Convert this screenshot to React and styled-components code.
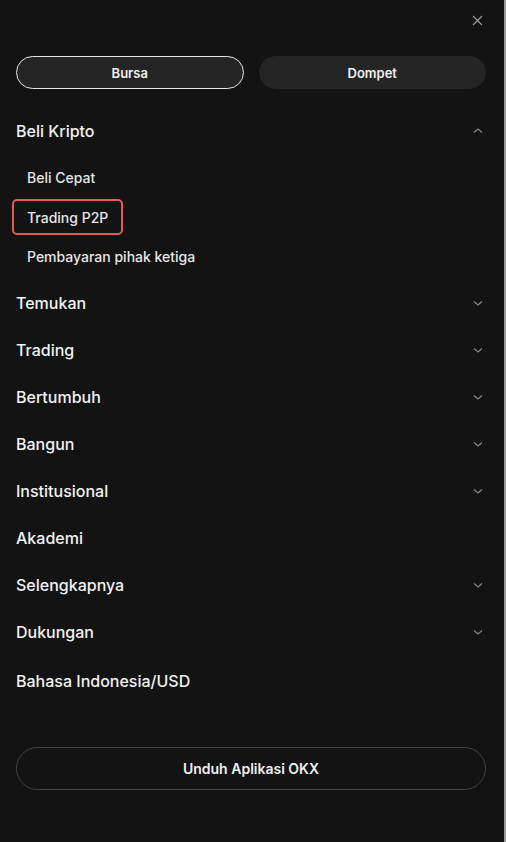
import React from 'react';
import styled, { createGlobalStyle } from 'styled-components';

const GlobalStyle = createGlobalStyle`
  html, body {
    margin: 0;
    padding: 0;
    background: #131313;
  }
  body {
    font-family: Inter, "Noto Sans", sans-serif;
    -webkit-font-smoothing: antialiased;
  }
`

const Page = styled.div`
  display: flex;
  width: 506px;
  height: 842px;
  overflow: hidden;
`

const Panel = styled.div`
  flex: 1;
  display: flex;
  flex-direction: column;
  background: #131313;
  padding: 0 18px 0 16px;
`

const Edge = styled.div`
  width: 2px;
  background: #9a9a9a;
`

const Header = styled.div`
  display: flex;
  justify-content: flex-end;
  align-items: center;
  height: 40px;
  padding-right: 3px;
`

const CloseBtn = styled.button`
  border: none;
  background: none;
  padding: 0;
  display: flex;
  color: #9b9b9b;
  cursor: pointer;
`

const Tabs = styled.div`
  display: grid;
  grid-template-columns: 1fr 1fr;
  gap: 15px;
  margin-top: 16px;
`

const Tab = styled.button`
  height: 33px;
  border-radius: 17px;
  background: #252525;
  border: 1px solid ${p => (p.active ? '#e8e8e8' : '#252525')};
  color: #f0f0f0;
  font-family: inherit;
  font-size: 13px;
  font-weight: 600;
`

const Nav = styled.nav`
  margin-top: 18px;
  display: flex;
  flex-direction: column;
`

const Row = styled.div`
  display: flex;
  align-items: center;
  justify-content: space-between;
  height: 47px;
  margin-top: ${p => (p.gap ? '2px' : '0')};
  color: #f2f2f2;
  font-size: 16px;
  font-weight: 500;
`

const Chevron = styled.svg`
  width: 10px;
  height: 10px;
  margin-right: 3px;
  color: #8a8a8a;
`

const SubList = styled.div`
  display: flex;
  flex-direction: column;
  padding: 4px 0 3px;
`

const SubItem = styled.div`
  display: flex;
  align-items: center;
  height: 39.5px;
`

const SubLabel = styled.span`
  box-sizing: border-box;
  display: inline-flex;
  align-items: center;
  height: 36px;
  padding: 0 ${p => (p.marked ? '13px' : '11px')};
  margin-left: ${p => (p.marked ? '-4px' : '0')};
  border: ${p => (p.marked ? '2px solid #e65a55' : 'none')};
  border-radius: 5px;
  color: #e6e6e6;
  font-size: 14px;
  font-weight: 500;
`

const Footer = styled.div`
  margin-top: 42px;
`

const DownloadBtn = styled.button`
  width: 100%;
  height: 43px;
  border-radius: 22px;
  background: transparent;
  border: 1px solid #444;
  color: #f0f0f0;
  font-family: inherit;
  font-size: 14px;
  font-weight: 600;
`

const ChevronIcon = ({ up }) => (
  <Chevron viewBox="0 0 10 10" fill="none" stroke="currentColor" strokeWidth="1.1">
    {up ? <path d="M1 6.5 L5 3 L9 6.5" /> : <path d="M1 3.5 L5 7 L9 3.5" />}
  </Chevron>
)

const items = [
  { label: 'Temukan', arrow: true },
  { label: 'Trading', arrow: true },
  { label: 'Bertumbuh', arrow: true },
  { label: 'Bangun', arrow: true },
  { label: 'Institusional', arrow: true },
  { label: 'Akademi' },
  { label: 'Selengkapnya', arrow: true },
  { label: 'Dukungan', arrow: true },
]

export default function App() {
  return (
    <Page>
      <GlobalStyle />
      <Panel>
        <Header>
          <CloseBtn aria-label="close">
            <svg width="11" height="11" viewBox="0 0 11 11" stroke="currentColor" strokeWidth="1.2">
              <path d="M1 1 L10 10 M10 1 L1 10" />
            </svg>
          </CloseBtn>
        </Header>
        <Tabs>
          <Tab active>Bursa</Tab>
          <Tab>Dompet</Tab>
        </Tabs>
        <Nav>
          <Row>
            Beli Kripto
            <ChevronIcon up />
          </Row>
          <SubList>
            <SubItem><SubLabel>Beli Cepat</SubLabel></SubItem>
            <SubItem><SubLabel marked>Trading P2P</SubLabel></SubItem>
            <SubItem><SubLabel>Pembayaran pihak ketiga</SubLabel></SubItem>
          </SubList>
          {items.map(it => (
            <Row key={it.label}>
              {it.label}
              {it.arrow && <ChevronIcon />}
            </Row>
          ))}
          <Row gap>Bahasa Indonesia/USD</Row>
        </Nav>
        <Footer>
          <DownloadBtn>Unduh Aplikasi OKX</DownloadBtn>
        </Footer>
      </Panel>
      <Edge />
    </Page>
  )
}
